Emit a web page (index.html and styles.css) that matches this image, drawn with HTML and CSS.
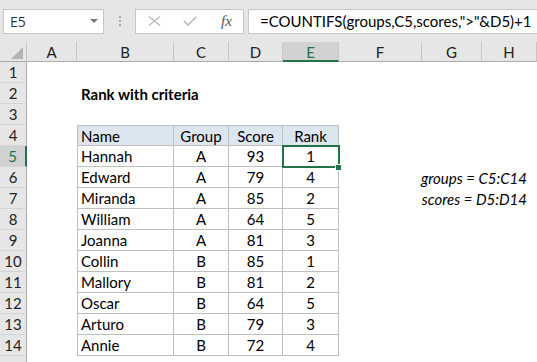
FILE: index.html
```html
<!DOCTYPE html>
<html lang="en">
<head>
  <meta charset="UTF-8" />
  <title>Rank with criteria</title>
  <link rel="stylesheet" href="styles.css">
</head>
<body>
  <div class="formula-bar">
    <div class="name-box">
      <span>E5</span>
      <span class="caret"></span>
    </div>
    <div class="grip"><i></i><i></i><i></i></div>
    <div class="fx-box">
      <svg class="fx-icon" width="13" height="10" viewBox="0 0 13 10"><path d="M1 0.5 L12 9.5 M12 0.5 L1 9.5" stroke="#b8b8b8" stroke-width="1.3" fill="none"/></svg>
      <svg class="fx-icon" width="14" height="10" viewBox="0 0 14 10"><path d="M0.8 5 L5 9 L13.3 0.8" stroke="#b8b8b8" stroke-width="1.6" fill="none"/></svg>
      <span class="fx">fx</span>
    </div>
    <div class="formula">=COUNTIFS(groups,C5,scores,"&gt;"&amp;D5)+1</div>
  </div>

  <div class="sheet">
    <!-- column headers -->
    <div class="corner"></div>
    <div class="ch">A</div><div class="ch">B</div><div class="ch">C</div><div class="ch">D</div>
    <div class="ch active">E</div><div class="ch">F</div><div class="ch">G</div><div class="ch">H</div>

    <div class="rh">1</div><div></div><div></div><div></div><div></div><div></div><div></div><div></div><div></div>

    <div class="rh">2</div><div></div><div class="cell title">Rank with criteria</div><div></div><div></div><div></div><div></div><div></div><div></div>

    <div class="rh">3</div><div></div><div></div><div></div><div></div><div></div><div></div><div></div><div></div>

    <div class="rh">4</div><div></div>
    <div class="cell t head first">Name</div><div class="cell t head mid">Group</div><div class="cell t head mid">Score</div><div class="cell t head mid">Rank</div>
    <div></div><div></div><div></div>

    <div class="rh active">5</div><div></div>
    <div class="cell t first">Hannah</div><div class="cell t mid">A</div><div class="cell t mid">93</div><div class="cell t mid sel">1</div>
    <div></div><div></div><div></div>

    <div class="rh">6</div><div></div>
    <div class="cell t first">Edward</div><div class="cell t mid">A</div><div class="cell t mid">79</div><div class="cell t mid">4</div>
    <div class="cell note">groups = C5:C14</div>

    <div class="rh">7</div><div></div>
    <div class="cell t first">Miranda</div><div class="cell t mid">A</div><div class="cell t mid">85</div><div class="cell t mid">2</div>
    <div class="cell note">scores = D5:D14</div>

    <div class="rh">8</div><div></div>
    <div class="cell t first">William</div><div class="cell t mid">A</div><div class="cell t mid">64</div><div class="cell t mid">5</div>
    <div></div><div></div><div></div>

    <div class="rh">9</div><div></div>
    <div class="cell t first">Joanna</div><div class="cell t mid">A</div><div class="cell t mid">81</div><div class="cell t mid">3</div>
    <div></div><div></div><div></div>

    <div class="rh">10</div><div></div>
    <div class="cell t first">Collin</div><div class="cell t mid">B</div><div class="cell t mid">85</div><div class="cell t mid">1</div>
    <div></div><div></div><div></div>

    <div class="rh">11</div><div></div>
    <div class="cell t first">Mallory</div><div class="cell t mid">B</div><div class="cell t mid">81</div><div class="cell t mid">2</div>
    <div></div><div></div><div></div>

    <div class="rh">12</div><div></div>
    <div class="cell t first">Oscar</div><div class="cell t mid">B</div><div class="cell t mid">64</div><div class="cell t mid">5</div>
    <div></div><div></div><div></div>

    <div class="rh">13</div><div></div>
    <div class="cell t first">Arturo</div><div class="cell t mid">B</div><div class="cell t mid">79</div><div class="cell t mid">3</div>
    <div></div><div></div><div></div>

    <div class="rh">14</div><div></div>
    <div class="cell t first">Annie</div><div class="cell t mid">B</div><div class="cell t mid">72</div><div class="cell t mid">4</div>
    <div></div><div></div><div></div>

    <!-- row 15 is only a sliver at the bottom edge -->
    <div class="rh"></div><div></div><div></div><div></div><div></div><div></div><div></div><div></div><div></div>
  </div>
</body>
</html>
```

FILE: styles.css
```css
body {
  margin: 0;
  background: #fff;
  font-family: 'Lato', 'Liberation Sans', sans-serif;
  color: #000;
  overflow: hidden;
}

/* Formula bar */
.formula-bar {
  display: flex;
  align-items: center;
  height: 42px;
  padding: 0 0 0 3px;
  background: #e6e6e6;
  box-sizing: border-box;
}

.name-box {
  width: 101px;
  height: 25px;
  box-sizing: border-box;
  background: #fff;
  border: 1px solid #c6c6c6;
  display: flex;
  align-items: center;
  justify-content: space-between;
  padding: 0 5px 0 6px;
  font-family: 'Open Sans', sans-serif;
  font-size: 14px;
  color: #333;
}

.caret {
  width: 0;
  height: 0;
  border-left: 4px solid transparent;
  border-right: 4px solid transparent;
  border-top: 4px solid #777;
}

.grip {
  width: 31px;
  display: flex;
  flex-direction: column;
  align-items: center;
  gap: 2px;
}

.grip i {
  width: 2px;
  height: 2px;
  background: #adadad;
}

.fx-box {
  width: 109px;
  height: 25px;
  box-sizing: border-box;
  background: #fff;
  border: 1px solid #c6c6c6;
  display: flex;
  align-items: center;
  padding-left: 12px;
  gap: 22px;
}

.fx {
  font-family: 'Liberation Serif', serif;
  font-style: italic;
  font-size: 15px;
  color: #555;
  margin-left: 2px;
}

.formula {
  flex: 1;
  margin-left: 4px;
  height: 25px;
  box-sizing: border-box;
  background: #fff;
  border: 1px solid #c6c6c6;
  border-right: none;
  padding-left: 11px;
  font-size: 15px;
  line-height: 23px;
  white-space: nowrap;
}

/* Sheet grid */
.sheet {
  display: grid;
  grid-template-columns: 27px 50px 97px 55px 54px 56px 83px 60px 1fr;
  grid-template-rows: 20px repeat(15, 21px);
  font-size: 15px;
}

.corner {
  position: relative;
  background: #e6e6e6;
  border-right: 1px solid #c6c6c6;
  border-bottom: 1px solid #ababab;
}

.corner::after {
  content: "";
  position: absolute;
  right: 3px;
  bottom: 2px;
  border-left: 12px solid transparent;
  border-bottom: 12px solid #b4b4b4;
}

.ch {
  background: #e6e6e6;
  border-right: 1px solid #c6c6c6;
  border-bottom: 1px solid #ababab;
  text-align: center;
  line-height: 20px;
  color: #222;
}

.ch.active {
  background: #d2d2d2;
  color: #217346;
  border-bottom: 2px solid #217346;
}

.rh {
  background: #e6e6e6;
  border-right: 1px solid #ababab;
  border-bottom: 1px solid #d4d4d4;
  text-align: center;
  line-height: 21px;
  color: #222;
}

.rh.active {
  background: #d2d2d2;
  color: #217346;
  border-right: 2px solid #217346;
}

.cell {
  line-height: 21px;
  white-space: nowrap;
  padding: 1px 4px 0;
}

.title {
  font-weight: 700;
}

.t {
  border-right: 1px solid #bfbfbf;
  border-bottom: 1px solid #bfbfbf;
  line-height: 19px;
}

.t.first {
  border-left: 1px solid #bfbfbf;
  padding-left: 3px;
}

.t.mid {
  text-align: center;
}

.t.head {
  background: #dce6f1;
  border-top: 1px solid #bfbfbf;
  line-height: 18px;
}

.sel {
  position: relative;
}

.sel::after {
  content: "";
  position: absolute;
  left: -1px;
  top: -1px;
  width: 58px;
  height: 23px;
  box-sizing: border-box;
  border: 2px solid #217346;
}

.sel::before {
  content: "";
  position: absolute;
  left: 53px;
  top: 19px;
  width: 5px;
  height: 5px;
  background: #217346;
  outline: 1px solid #fff;
  z-index: 1;
}

.note {
  grid-column: 7 / 10;
  font-style: italic;
  text-align: right;
  padding-right: 10px;
}
```
